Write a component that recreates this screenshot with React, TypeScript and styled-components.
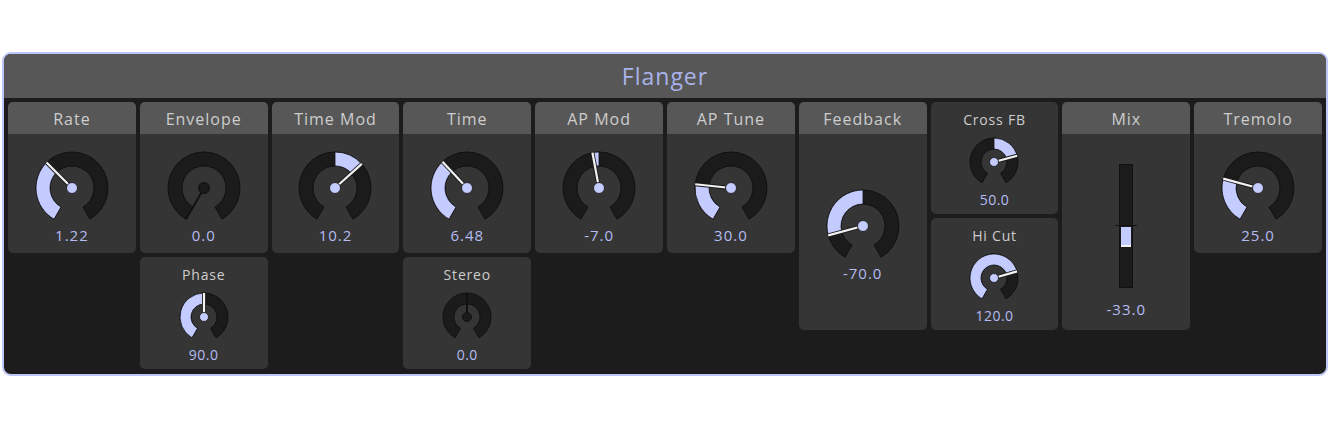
import React from "react";
import styled, { createGlobalStyle } from "styled-components";

const colors = {
  frame: "#bec5f8",
  back: "#1c1c1c",
  bar: "#575757",
  body: "#353535",
  ring: "#1b1b1b",
  edge: "#111111",
  accent: "#c3cbff",
  value: "#b4bcf2",
  label: "#cdcdcd",
};

const GlobalStyle = createGlobalStyle`
  html, body {
    margin: 0;
    padding: 0;
    background: #ffffff;
  }
  #root {
    padding: 52px 2px 0;
    font-family: "Open Sans", "Noto Sans", sans-serif;
    font-weight: 400;
  }
`;

type Module =
  | { kind: "knob"; name: string; value: string; norm: number; bipolar?: boolean; tall?: boolean }
  | { kind: "mini"; name: string; value: string; norm: number; bipolar?: boolean }
  | { kind: "slider"; name: string; value: string; amount: number };

const columns: Module[][] = [
  [{ kind: "knob", name: "Rate", value: "1.22", norm: 0.35 }],
  [
    { kind: "knob", name: "Envelope", value: "0.0", norm: 0 },
    { kind: "mini", name: "Phase", value: "90.0", norm: 0.5 },
  ],
  [{ kind: "knob", name: "Time Mod", value: "10.2", norm: 0.66, bipolar: true }],
  [
    { kind: "knob", name: "Time", value: "6.48", norm: 0.357 },
    { kind: "mini", name: "Stereo", value: "0.0", norm: 0.5, bipolar: true },
  ],
  [{ kind: "knob", name: "AP Mod", value: "-7.0", norm: 0.465, bipolar: true }],
  [{ kind: "knob", name: "AP Tune", value: "30.0", norm: 0.22 }],
  [{ kind: "knob", name: "Feedback", value: "-70.0", norm: 0.15, bipolar: true, tall: true }],
  [
    { kind: "mini", name: "Cross FB", value: "50.0", norm: 0.75, bipolar: true },
    { kind: "mini", name: "Hi Cut", value: "120.0", norm: 0.747 },
  ],
  [{ kind: "slider", name: "Mix", value: "-33.0", amount: -0.33 }],
  [{ kind: "knob", name: "Tremolo", value: "25.0", norm: 0.25 }],
];

// angles are degrees clockwise from the top
const polar = (c: number, r: number, deg: number) => {
  const rad = (deg * Math.PI) / 180;
  return [c + r * Math.sin(rad), c - r * Math.cos(rad)];
};

const sector = (c: number, ro: number, ri: number, a1: number, a2: number) => {
  const from = Math.min(a1, a2);
  const to = Math.max(a1, a2);
  const large = to - from > 180 ? 1 : 0;
  const [x1, y1] = polar(c, ro, from);
  const [x2, y2] = polar(c, ro, to);
  const [x3, y3] = polar(c, ri, to);
  const [x4, y4] = polar(c, ri, from);
  return `M${x1} ${y1} A${ro} ${ro} 0 ${large} 1 ${x2} ${y2} L${x3} ${y3} A${ri} ${ri} 0 ${large} 0 ${x4} ${y4} Z`;
};

function Dial({ norm, bipolar, size }: { norm: number; bipolar?: boolean; size: "big" | "small" }) {
  const ro = size === "big" ? 36 : 24;
  const ri = size === "big" ? 22 : 13;
  const dot = size === "big" ? 5.5 : 4.5;
  const box = ro * 2 + 4;
  const c = box / 2;
  const angle = -150 + 300 * norm;
  const start = bipolar ? 0 : -150;
  const neutral = Math.abs(angle - start) < 0.5;
  const [px, py] = polar(c, ro, angle);

  return (
    <svg width={box} height={box} viewBox={`0 0 ${box} ${box}`}>
      <path d={sector(c, ro, ri, -150, 150)} fill={colors.ring} stroke={colors.edge} strokeWidth={1} />
      {!neutral && (
        <path d={sector(c, ro, ri, start, angle)} fill={colors.accent} stroke={colors.edge} strokeWidth={0.8} />
      )}
      {neutral ? (
        <line x1={c} y1={c} x2={px} y2={py} stroke={colors.edge} strokeWidth={2} />
      ) : (
        <>
          <line x1={c} y1={c} x2={px} y2={py} stroke="#1a1a1a" strokeWidth={4} />
          <line x1={c} y1={c} x2={px} y2={py} stroke="#f2f2f2" strokeWidth={2.2} />
        </>
      )}
      <circle
        cx={c}
        cy={c}
        r={dot}
        fill={neutral ? colors.ring : colors.accent}
        stroke={neutral ? colors.edge : "#262626"}
        strokeWidth={1}
      />
    </svg>
  );
}

function Fader({ amount }: { amount: number }) {
  const half = 61;
  const size = Math.abs(amount) * half;
  return (
    <Track>
      <CenterTick />
      <FaderFill style={amount < 0 ? { top: half + 1, height: size } : { bottom: half + 1, height: size }} $down={amount < 0} />
    </Track>
  );
}

export default function App() {
  return (
    <>
      <GlobalStyle />
      <Frame>
        <TitleBar>Flanger</TitleBar>
        <Columns>
          {columns.map((col, i) => (
            <Column key={i}>
              {col.map((m) => {
                if (m.kind === "mini") {
                  return (
                    <MiniPanel key={m.name}>
                      <MiniLabel>{m.name}</MiniLabel>
                      <Dial norm={m.norm} bipolar={m.bipolar} size="small" />
                      <MiniValue>{m.value}</MiniValue>
                    </MiniPanel>
                  );
                }
                if (m.kind === "slider") {
                  return (
                    <Panel key={m.name} $tall>
                      <Header>{m.name}</Header>
                      <SliderBody>
                        <Fader amount={m.amount} />
                        <Value>{m.value}</Value>
                      </SliderBody>
                    </Panel>
                  );
                }
                return (
                  <Panel key={m.name} $tall={m.tall}>
                    <Header>{m.name}</Header>
                    <KnobBody $tall={m.tall}>
                      <Dial norm={m.norm} bipolar={m.bipolar} size="big" />
                      <Value>{m.value}</Value>
                    </KnobBody>
                  </Panel>
                );
              })}
            </Column>
          ))}
        </Columns>
      </Frame>
    </>
  );
}

const Frame = styled.div`
  box-sizing: border-box;
  width: 1326px;
  height: 324px;
  border: 2px solid ${colors.frame};
  border-radius: 9px;
  background: ${colors.back};
  overflow: hidden;
  display: flex;
  flex-direction: column;
`;

const TitleBar = styled.div`
  height: 44px;
  flex-shrink: 0;
  background: ${colors.bar};
  color: #aab2ea;
  font-size: 23px;
  letter-spacing: 1px;
  display: flex;
  align-items: center;
  justify-content: center;
`;

const Columns = styled.div`
  display: grid;
  grid-template-columns: repeat(10, 1fr);
  gap: 4px;
  padding: 4px;
  align-items: start;
`;

const Column = styled.div`
  display: flex;
  flex-direction: column;
  gap: 4px;
`;

const Panel = styled.div<{ $tall?: boolean }>`
  height: ${(p) => (p.$tall ? 228 : 151)}px;
  background: ${colors.body};
  border-radius: 5px;
  overflow: hidden;
  display: flex;
  flex-direction: column;
`;

const Header = styled.div`
  height: 32px;
  box-sizing: border-box;
  padding-top: 2px;
  flex-shrink: 0;
  background: ${colors.bar};
  color: ${colors.label};
  font-size: 16px;
  letter-spacing: 1px;
  display: flex;
  align-items: center;
  justify-content: center;
`;

const KnobBody = styled.div<{ $tall?: boolean }>`
  flex: 1;
  display: flex;
  flex-direction: column;
  align-items: center;
  justify-content: ${(p) => (p.$tall ? "center" : "flex-start")};
  padding-top: ${(p) => (p.$tall ? 6 : 16)}px;
`;

const SliderBody = styled.div`
  flex: 1;
  display: flex;
  flex-direction: column;
  align-items: center;
  padding-top: 30px;
  gap: 12px;
`;

const Value = styled.div`
  height: 20px;
  line-height: 20px;
  margin-top: -1px;
  color: ${colors.value};
  font-size: 15px;
  letter-spacing: 1px;
`;

const MiniPanel = styled.div`
  height: 112px;
  box-sizing: border-box;
  padding-top: 8px;
  background: ${colors.body};
  border-radius: 5px;
  display: flex;
  flex-direction: column;
  align-items: center;
`;

const MiniLabel = styled.div`
  height: 20px;
  line-height: 20px;
  margin-bottom: 6px;
  color: ${colors.label};
  font-size: 14px;
  letter-spacing: 0.8px;
`;

const MiniValue = styled.div`
  height: 20px;
  line-height: 20px;
  margin-top: 2px;
  color: ${colors.value};
  font-size: 14px;
  letter-spacing: 0.5px;
`;

const Track = styled.div`
  position: relative;
  box-sizing: border-box;
  width: 14px;
  height: 124px;
  background: ${colors.ring};
  border: 1px solid ${colors.edge};
`;

const CenterTick = styled.div`
  position: absolute;
  left: -5px;
  right: -5px;
  top: 60px;
  height: 1px;
  background: ${colors.edge};
`;

const FaderFill = styled.div<{ $down: boolean }>`
  position: absolute;
  left: 1px;
  right: 1px;
  background: ${colors.accent};
  ${(p) => (p.$down ? "border-bottom: 2px solid #f2f2f2;" : "border-top: 2px solid #f2f2f2;")}
  box-sizing: border-box;
`;
